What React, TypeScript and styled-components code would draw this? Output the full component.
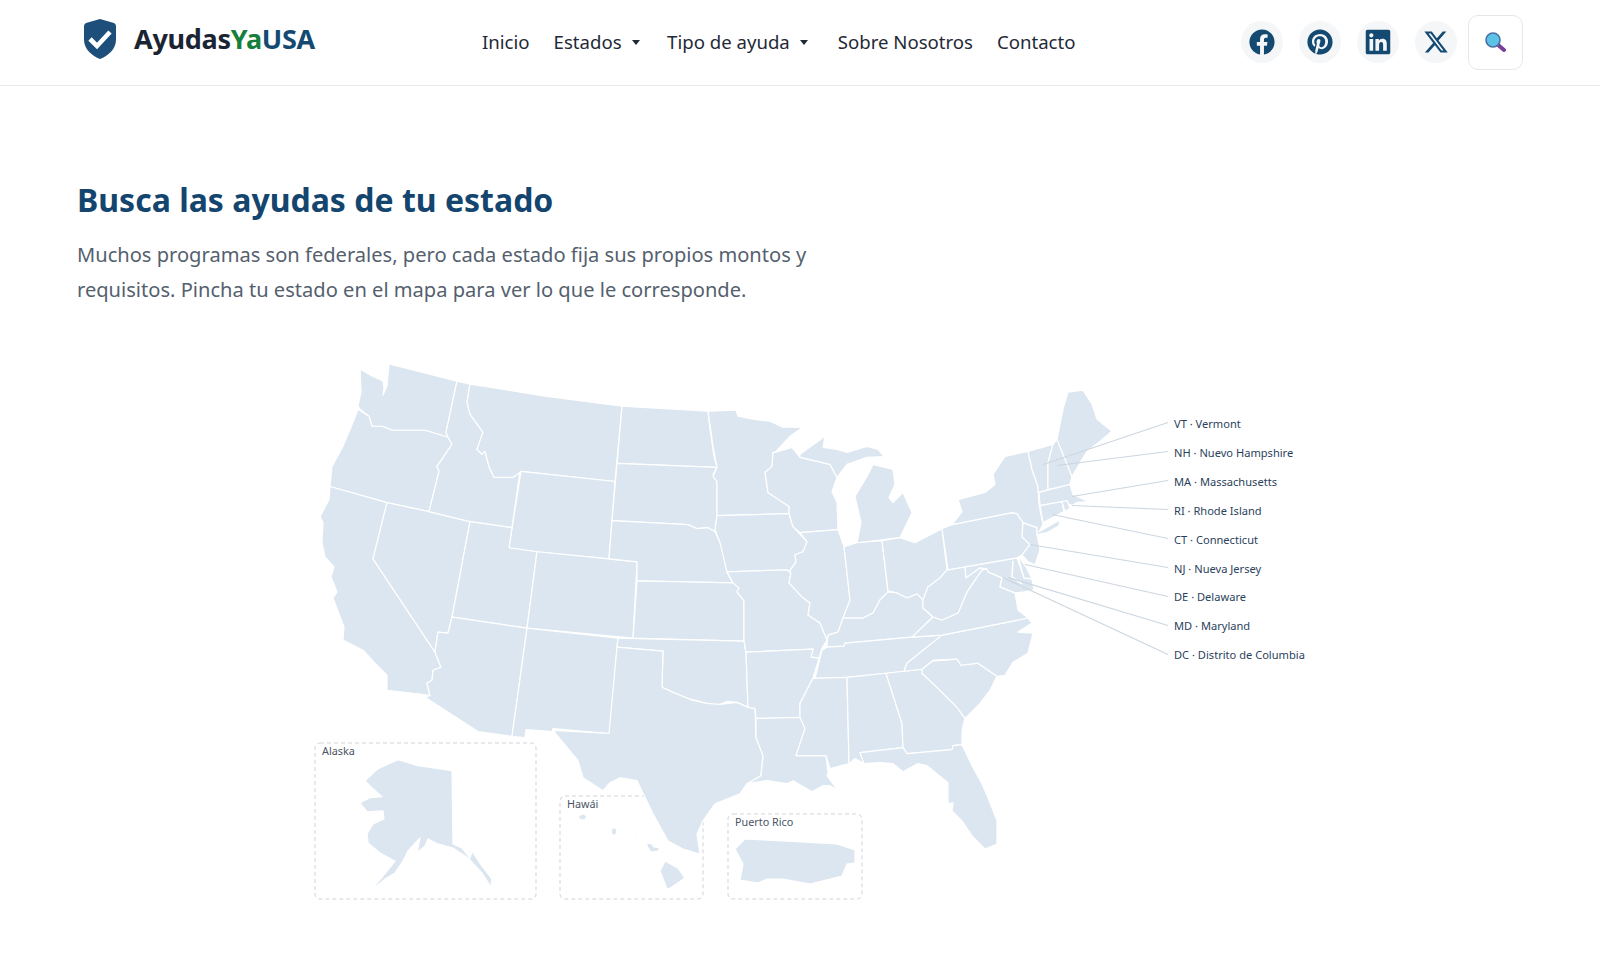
import React from 'react';
import styled, { createGlobalStyle } from 'styled-components';
import { FaFacebook, FaPinterest, FaLinkedin } from 'react-icons/fa';
import { FaXTwitter } from 'react-icons/fa6';

const GlobalStyle = createGlobalStyle`
  html, body { margin: 0; padding: 0; background: #fff; }
  body { font-family: "Noto Sans", "Open Sans", "Liberation Sans", sans-serif; color: #1b2433; }
  * { box-sizing: border-box; }
`;

const STATES: Record<string, string> = {
  WA: '360,370 372,377 383,382 384,388 383,396 387,387 389,365 457,382 446,433 448,438 425,431 392,431 382,427 372,427 369,417 360,410 358,407 361,393',
  OR: '358,410 369,417 372,427 382,427 392,431 425,431 448,438 452,445 437,467 439,472 429,512 387,503 330,487 332,467 343,447 353,423',
  CA: '330,487 387,503 373,559 435,652 441,667 433,670 432,680 427,683 430,695 387,690 387,675 375,663 363,650 343,640 344,627 333,598 337,592 331,577 334,567 325,557 322,543 323,523 320,517 329,500',
  NV: '387,503 429,512 470,522 452,617 448,633 438,632 435,652 373,559',
  ID: '457,382 470,385 467,403 470,415 483,433 477,450 482,455 485,452 489,467 494,478 513,478 520,472 512,528 470,522 429,512 439,472 437,467 452,445 448,438 446,433',
  MT: '470,385 545,397 622,407 615,482 521,472 513,478 494,478 489,467 485,452 482,455 477,450 483,433 470,415 467,403',
  WY: '521,472 615,482 609,559 537,552 509,548',
  UT: '470,522 512,528 509,548 537,552 527,628 452,617',
  CO: '537,552 609,559 637,562 633,638 527,628',
  AZ: '452,617 527,628 512,736 478,731 425,697 430,695 427,683 432,680 433,670 441,667 435,652 438,632 448,633',
  NM: '527,628 618,638 617,648 610,733 553,728 552,731 526,729 525,737 512,736',
  ND: '622,407 708,412 710,430 714,457 717,468 617,464',
  SD: '617,464 717,468 713,475 717,482 717,515 715,532 708,528 697,529 688,525 612,521',
  NE: '612,521 688,525 697,529 708,528 715,532 722,547 727,572 733,583 637,581 637,562 609,559',
  KS: '637,581 733,583 739,588 737,592 744,601 744,641 633,638',
  OK: '618,638 744,641 746,652 748,707 737,702 727,701 718,705 707,703 695,700 683,697 673,692 662,687 663,651 617,647',
  TX: '617,647 663,651 662,687 673,692 693,700 707,703 720,704 737,702 748,707 755,708 756,737 763,755 761,775 747,783 740,793 715,803 710,810 703,820 697,833 700,853 683,848 668,840 653,813 637,780 620,777 610,782 603,790 583,777 578,760 553,730 609,733',
  MN: '708,412 736,411 738,417 753,420 770,422 783,428 803,428 790,437 775,453 773,453 772,467 765,473 768,493 789,507 789,514 717,516 717,482 713,477 717,468 713,447',
  IA: '717,516 789,514 793,527 807,542 803,552 795,555 796,562 789,572 787,570 727,572 720,543 715,530',
  MO: '727,572 787,570 791,573 789,583 802,597 810,603 808,615 820,623 827,640 822,648 819,658 811,657 813,649 746,652 744,641 744,601 737,592 739,588 733,583',
  AR: '746,652 813,649 811,657 819,658 813,678 800,703 800,717 756,718 755,708 748,707',
  LA: '756,718 800,717 805,728 796,755 826,755 828,772 827,775 838,790 830,785 823,785 812,791 793,780 787,783 767,780 747,783 761,775 763,755 756,737',
  WI: '773,453 775,453 792,448 800,458 830,465 837,478 832,492 837,503 838,530 800,533 793,527 789,514 789,507 768,493 765,473 772,467',
  MIU: '800,455 825,437 823,448 837,450 847,453 867,447 878,450 885,458 890,457 867,458 847,465 837,478 830,465 800,458',
  MIL: '873,465 893,470 895,485 889,498 893,503 903,493 912,513 900,538 857,543 861,523 855,497 867,477',
  IL: '800,533 838,530 844,547 850,600 843,618 838,632 828,635 827,640 820,623 808,615 810,603 802,597 789,583 791,573 789,572 796,562 795,555 803,552 807,542',
  IN: '844,547 857,543 882,541 888,592 880,600 873,613 863,618 843,618 850,600',
  OH: '882,541 900,538 915,543 942,529 947,570 940,578 928,587 923,600 917,594 907,598 897,593 888,591',
  KY: '888,592 897,593 907,598 917,594 923,600 923,608 933,617 912,637 845,643 844,646 827,647 828,635 838,632 843,618 863,618 873,613 880,600',
  TN: '827,647 844,646 845,643 912,637 942,635 927,647 907,663 904,671 886,673 847,677 815,678 822,650',
  MS: '813,678 847,677 849,763 830,768 826,755 796,755 805,728 800,717 800,703',
  AL: '847,677 886,673 902,723 903,747 860,752 864,763 855,758 849,763',
  GA: '886,673 904,671 922,669 922,673 937,687 957,707 965,718 962,730 962,744 953,745 952,749 907,753 903,747 902,723',
  SC: '922,669 932,661 957,659 961,665 978,663 997,676 990,690 980,703 965,718 957,707 937,687 922,673',
  NC: '904,671 907,663 927,647 942,635 1028,618 1032,623 1018,632 1033,633 1028,653 1013,662 1005,675 997,676 978,663 961,665 957,659 933,660 922,669',
  FL: '860,752 903,747 907,753 952,749 953,745 962,744 972,765 982,783 990,802 997,820 997,843 985,848 972,835 962,820 952,810 953,802 948,803 948,782 927,765 918,763 903,771 893,763 880,762 864,763',
  VA: '912,637 933,617 942,620 958,613 967,592 973,583 982,570 987,569 988,572 1002,578 1000,587 1015,593 1018,610 1028,618 942,635',
  WV: '947,570 965,567 966,578 980,568 987,569 982,570 973,583 967,592 958,613 942,620 933,617 923,608 923,600 928,587 940,578',
  MD: '965,567 1017,558 1024,578 1032,579 1034,590 1024,592 1015,593 1000,587 1002,578 988,572 987,569 980,568 966,578',
  DE: '1018,556 1026,567 1032,579 1024,578',
  PA: '942,529 952,525 1012,513 1017,514 1023,522 1022,537 1030,545 1022,555 1017,558 948,570',
  NJ: '1023,523 1037,528 1037,535 1040,550 1035,565 1028,562 1022,555 1030,545 1022,537',
  NY: '952,525 962,512 958,500 985,493 995,485 993,475 1005,457 1028,452 1032,470 1038,487 1039,505 1043,525 1039,532 1060,520 1059,526 1047,533 1037,535 1037,528 1023,523 1017,514 1012,513',
  VT: '1028,452 1053,445 1048,463 1048,490 1038,493 1038,487 1032,470',
  NH: '1053,445 1057,440 1072,477 1070,485 1048,490 1048,463',
  ME: '1057,440 1063,410 1068,393 1083,391 1092,405 1097,420 1112,432 1100,442 1087,452 1072,477',
  MA: '1039,493 1070,485 1073,495 1088,502 1077,503 1072,506 1063,502 1040,506',
  CT: '1040,506 1062,502 1064,512 1043,523',
  RI: '1062,502 1067,501 1070,509 1065,512',
  PR: '735,848 745,838 783,840 837,843 855,849 855,862 847,863 842,875 810,883 783,878 767,878 758,882 740,879 743,863',
  HI1: '578,815 583,813 587,815 585,819 580,819',
  HI2: '612,827 616,827 617,832 614,835 611,832',
  HI3: '632,837 638,836 637,838 633,838',
  HI4: '646,842 652,843 654,846 660,847 658,850 651,851 648,847',
  HI5: '665,860 678,867 685,877 670,887 667,888 660,870',
  AK: '365,780 378,768 398,759 418,765 452,770 453,843 462,847 470,857 472,850 482,865 492,878 491,886 482,872 468,857 453,847 438,843 428,838 425,845 417,852 420,837 408,850 403,860 395,872 385,878 370,890 383,875 395,860 380,852 368,842 367,833 373,823 384,818 383,810 367,811 360,802 370,797 382,796 373,788',
};

const INSETS = [
  { name: 'Alaska', x: 315, y: 742, w: 221, h: 156 },
  { name: 'Hawái', x: 560, y: 795, w: 143, h: 103 },
  { name: 'Puerto Rico', x: 728, y: 813, w: 134, h: 85 },
];

const CALLOUTS = [
  { label: 'VT · Vermont', y: 421.5, tx: 1043, ty: 463.5, base: 426.5 },
  { label: 'NH · Nuevo Hampshire', y: 450.5, tx: 1057, ty: 464.5, base: 455.5 },
  { label: 'MA · Massachusetts', y: 479.5, tx: 1072, ty: 495.5, base: 484.5 },
  { label: 'RI · Rhode Island', y: 508.5, tx: 1072, ty: 504.5, base: 513.5 },
  { label: 'CT · Connecticut', y: 537.5, tx: 1052, ty: 513.5, base: 542.5 },
  { label: 'NJ · Nueva Jersey', y: 566.5, tx: 1030, ty: 543.5, base: 571.5 },
  { label: 'DE · Delaware', y: 595.5, tx: 1025, ty: 563.5, base: 599.5 },
  { label: 'MD · Maryland', y: 624.5, tx: 1008, ty: 576.5, base: 628.5 },
  { label: 'DC · Distrito de Columbia', y: 653.5, tx: 1003, ty: 576.5, base: 657.5 },
];

const Header = styled.header`
  height: 86px;
  border-bottom: 1px solid #e7e9ed;
  display: flex;
  align-items: center;
  padding: 0 77px 1px 84px;
`;

const Logo = styled.a`
  display: flex;
  align-items: center;
  gap: 18px;
  width: 398px;
  height: 40px;
  margin-top: -7px;
  font-size: 27px;
  font-weight: 700;
  color: #1b2433;
  letter-spacing: -0.3px;
`;

const Green = styled.span`
  color: #15803d;
`;

const Navy = styled.span`
  color: #144a72;
`;

const Nav = styled.nav`
  display: flex;
  align-items: center;
  gap: 24px;
  margin-top: -2px;
`;

const NavItem = styled.a<{ $caret?: number }>`
  display: flex;
  align-items: center;
  gap: 10px;
  margin-right: ${(p) => p.$caret ?? 0}px;
  font-size: 18.6px;
  color: #1f2937;
  &::after {
    content: '';
    display: ${(p) => (p.$caret ? 'block' : 'none')};
    margin-top: 2px;
    border-left: 4px solid transparent;
    border-right: 4px solid transparent;
    border-top: 5px solid #1f2937;
  }
`;

const Actions = styled.div`
  margin-left: auto;
  display: flex;
  align-items: center;
  gap: 16px;
`;

const Social = styled.a<{ $size?: number }>`
  width: 42px;
  height: 42px;
  border-radius: 50%;
  background: #f4f6f8;
  display: flex;
  align-items: center;
  justify-content: center;
  color: #144a72;
  font-size: ${(p) => p.$size ?? 26}px;
`;

const SearchButton = styled.button`
  width: 55px;
  height: 55px;
  margin-left: -5px;
  border: 1px solid #e5e7eb;
  border-radius: 10px;
  background: #fff;
  display: flex;
  align-items: center;
  justify-content: center;
  padding: 0 2px 0 0;
`;

const Main = styled.main`
  padding: 94px 77px 0;
`;

const Title = styled.h2`
  margin: 0 0 16.5px;
  font-size: 32px;
  line-height: 40px;
  font-weight: 700;
  color: #14456e;
`;

const Lead = styled.p`
  margin: 0;
  width: 770px;
  font-size: 20.1px;
  line-height: 35.5px;
  color: #555f6e;
`;

const MapFigure = styled.svg`
  display: block;
  width: 1010px;
  height: 550px;
  margin: 53px 0 0 233px;
`;

const StateShape = styled.polygon`
  fill: #dce6f0;
  stroke: #fff;
  stroke-width: 1.2;
  stroke-linejoin: round;
`;

const InsetFrame = styled.rect`
  fill: none;
  stroke: #cfd3d8;
  stroke-width: 1;
  stroke-dasharray: 4 3;
`;

const InsetName = styled.text`
  font-size: 10.8px;
  fill: #4b5563;
`;

const Leader = styled.line`
  stroke: #cdd6e0;
  stroke-width: 1.2;
`;

const LeaderLabel = styled.text`
  font-size: 11.1px;
  fill: #2b3f5c;
`;

const Bay = styled.polyline`
  fill: none;
  stroke: #fff;
  stroke-width: 1.6;
`;

const ShieldLogo = () => (
  <svg width="32" height="40" viewBox="0 0 32 40">
    <path
      d="M16 0 L30 4 Q32 5 32 7 V21 C32 30 24 37 16 40 C8 37 0 30 0 21 V7 Q0 5 2 4 Z"
      fill="#1d4f7a"
    />
    <path d="M6 20 L13 27 L26 13" fill="none" stroke="#fff" strokeWidth="4.6" />
  </svg>
);

const SearchGlyph = () => (
  <svg width="22" height="22" viewBox="0 0 22 22">
    <path d="M13 13 L20 19" stroke="#7b3f98" strokeWidth="4" strokeLinecap="round" />
    <circle cx="9" cy="9" r="7" fill="#5cc3e6" stroke="#4a6fa5" strokeWidth="1.6" />
  </svg>
);

export default function App() {
  return (
    <>
      <GlobalStyle />
      <Header>
        <Logo>
          <ShieldLogo />
          <span>
            Ayudas<Green>Ya</Green>
            <Navy>USA</Navy>
          </span>
        </Logo>
        <Nav>
          <NavItem>Inicio</NavItem>
          <NavItem $caret={3.5}>Estados</NavItem>
          <NavItem $caret={6}>Tipo de ayuda</NavItem>
          <NavItem>Sobre Nosotros</NavItem>
          <NavItem>Contacto</NavItem>
        </Nav>
        <Actions>
          <Social><FaFacebook /></Social>
          <Social><FaPinterest /></Social>
          <Social $size={28}><FaLinkedin /></Social>
          <Social><FaXTwitter /></Social>
          <SearchButton aria-label="Buscar"><SearchGlyph /></SearchButton>
        </Actions>
      </Header>
      <Main>
        <Title>Busca las ayudas de tu estado</Title>
        <Lead>
          Muchos programas son federales, pero cada estado fija sus propios montos y
          requisitos. Pincha tu estado en el mapa para ver lo que le corresponde.
        </Lead>
        <MapFigure viewBox="310 360 1010 550">
          {INSETS.map((i) => (
            <InsetFrame key={i.name} x={i.x} y={i.y} width={i.w} height={i.h} rx="5" />
          ))}
          <g transform="translate(0 -3.5) scale(1 1.0041)">
            {Object.entries(STATES).map(([id, pts]) => (
              <StateShape key={id} points={pts} />
            ))}
            <Bay points="1013,561 1012,577 1022,584" />
          </g>
          {INSETS.map((i) => (
            <InsetName key={i.name} x={i.x + 7} y={i.y + 12}>{i.name}</InsetName>
          ))}
          {CALLOUTS.map((c) => (
            <g key={c.label}>
              <Leader x1={1168} y1={c.y} x2={c.tx} y2={c.ty} />
              <LeaderLabel x={1174} y={c.base}>{c.label}</LeaderLabel>
            </g>
          ))}
        </MapFigure>
      </Main>
    </>
  );
}
